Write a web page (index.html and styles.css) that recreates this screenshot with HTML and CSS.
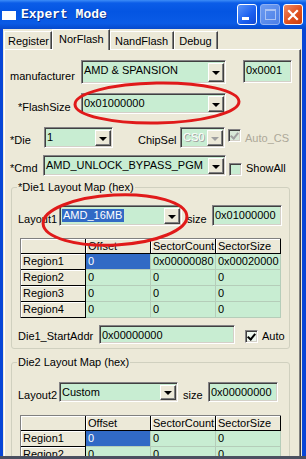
FILE: index.html
```html
<!DOCTYPE html>
<html lang="en">
<head>
  <meta charset="UTF-8">
  <title>Expert Mode</title>
  <link rel="stylesheet" href="styles.css">
</head>
<body>
  <div class="window">
    <div class="titlebar">
      <span class="app-icon"></span>
      <span class="title">Expert Mode</span>
      <div class="caption-btns">
        <div class="cap-btn min"><span class="min-bar"></span></div>
        <div class="cap-btn max"><span class="max-box"></span></div>
        <div class="cap-btn close">
          <svg width="12" height="12" viewBox="0 0 12 12"><path d="M2 2 L10 10 M10 2 L2 10" stroke="#fff" stroke-width="2.2" stroke-linecap="square"/></svg>
        </div>
      </div>
    </div>

    <div class="client">
      <div class="tabs">
        <div class="tab first">Register</div>
        <div class="tab active">NorFlash</div>
        <div class="tab">NandFlash</div>
        <div class="tab">Debug</div>
      </div>

      <div class="page">
        <div class="row row-manu">
          <span class="lbl lbl-manu">manufacturer</span>
          <div class="combo w-145"><span class="val">AMD &amp; SPANSION</span><span class="drop"></span></div>
          <div class="edit e-id">0x0001</div>
        </div>

        <div class="row row-size">
          <span class="lbl lbl-flash">*FlashSize</span>
          <div class="combo w-145"><span class="val">0x01000000</span><span class="drop"></span></div>
        </div>

        <div class="row row-die">
          <span class="lbl lbl-die">*Die</span>
          <div class="combo w-69"><span class="val">1</span><span class="drop"></span></div>
          <span class="lbl lbl-chip">ChipSel</span>
          <div class="combo w-45 disabled"><span class="val">CS0</span><span class="drop"></span></div>
          <span class="check disabled checked"></span>
          <span class="check-text muted">Auto_CS</span>
        </div>

        <div class="row row-cmd">
          <span class="lbl lbl-cmd">*Cmd</span>
          <div class="combo w-183"><span class="val">AMD_UNLOCK_BYPASS_PGM</span><span class="drop"></span></div>
          <span class="check cmd-check"></span>
          <span class="check-text">ShowAll</span>
        </div>

        <fieldset class="group group-1">
          <legend>*Die1 Layout Map (hex)</legend>
          <div class="row row-layout">
            <span class="lbl lbl-layout">Layout1</span>
            <div class="combo w-123"><span class="val"><span class="sel">AMD_16MB</span></span><span class="drop"></span></div>
            <span class="lbl lbl-size">size</span>
            <div class="edit e-size">0x01000000</div>
          </div>

          <div class="grid">
            <div class="hd"></div><div class="hd">Offset</div><div class="hd">SectorCount</div><div class="hd">SectorSize</div>
            <div class="rh">Region1</div><div class="cell current">0</div><div class="cell">0x00000080</div><div class="cell">0x00020000</div>
            <div class="rh">Region2</div><div class="cell">0</div><div class="cell">0</div><div class="cell">0</div>
            <div class="rh">Region3</div><div class="cell">0</div><div class="cell">0</div><div class="cell">0</div>
            <div class="rh">Region4</div><div class="cell">0</div><div class="cell">0</div><div class="cell">0</div>
          </div>

          <div class="row row-start">
            <span class="lbl lbl-start">Die1_StartAddr</span>
            <div class="edit e-start">0x00000000</div>
            <span class="check checked auto-check"></span>
            <span class="check-text">Auto</span>
          </div>
        </fieldset>

        <fieldset class="group group-2">
          <legend>Die2 Layout Map (hex)</legend>
          <div class="row row-layout2">
            <span class="lbl lbl-layout2">Layout2</span>
            <div class="combo w-119"><span class="val">Custom</span><span class="drop"></span></div>
            <span class="lbl lbl-size">size</span>
            <div class="edit e-size">0x00000000</div>
          </div>

          <div class="grid grid-2">
            <div class="hd"></div><div class="hd">Offset</div><div class="hd">SectorCount</div><div class="hd">SectorSize</div>
            <div class="rh">Region1</div><div class="cell current">0</div><div class="cell">0</div><div class="cell">0</div>
            <div class="rh">Region2</div><div class="cell">0</div><div class="cell">0</div><div class="cell">0</div>
          </div>
        </fieldset>
      </div>
    </div>
    <div class="frame-bottom"></div>

    <svg class="marks" width="306" height="459" viewBox="0 0 306 459">
      <ellipse cx="157" cy="103" rx="82" ry="20" fill="none" stroke="#e01a1a" stroke-width="3" transform="rotate(-1 157 103)"/>
      <ellipse cx="115" cy="220" rx="72" ry="25" fill="none" stroke="#e01a1a" stroke-width="3" transform="rotate(-3 115 220)"/>
    </svg>
  </div>
</body>
</html>
```

FILE: styles.css
```css
body {
  margin: 0;
  background: #ece9d8;
  font-family: "Liberation Sans", Arial, sans-serif;
  font-size: 11px;
  color: #000;
}

.window {
  position: relative;
  width: 306px;
  height: 459px;
  background: #0846d6;
  display: flex;
  flex-direction: column;
  overflow: hidden;
}

/* title bar */
.titlebar {
  height: 29px;
  flex: none;
  display: flex;
  align-items: center;
  background: linear-gradient(to bottom, #3d8df7 0, #0b5de8 3px, #0455e2 40%, #0a5be6 80%, #0649cc 100%);
}

.app-icon {
  width: 14px;
  height: 9px;
  margin-left: 2px;
  margin-top: 1px;
  background: #fff;
}

.title {
  margin-left: 5px;
  font-family: "Liberation Mono", "Courier New", monospace;
  font-weight: bold;
  font-size: 13px;
  color: #fff;
  text-shadow: 1px 1px 0 #0a2f8a;
}

.caption-btns {
  margin-left: auto;
  margin-right: 3px;
  display: flex;
  gap: 3px;
}

.cap-btn {
  box-sizing: border-box;
  width: 20px;
  height: 21px;
  border: 1px solid #fff;
  border-radius: 3px;
  background: linear-gradient(135deg, #5b94f8, #1a5ff0 60%, #1249d4);
  display: flex;
  align-items: center;
  justify-content: center;
  position: relative;
}

.min-bar {
  position: absolute;
  left: 4px;
  bottom: 4px;
  width: 7px;
  height: 3px;
  background: #fff;
}

.cap-btn.max {
  border-color: #8fb1f3;
  background: linear-gradient(135deg, #6d9bf0, #4b7fe8);
}

.max-box {
  width: 9px;
  height: 8px;
  border: 1px solid #a9c2f4;
  border-top-width: 2px;
}

.cap-btn.close {
  background: linear-gradient(135deg, #f08b68, #e0511f 55%, #c93d0f);
}

/* client area */
.client {
  flex: 1;
  margin: 0 4px 0 3px;
  padding-top: 2px;
  background: #ece9d8;
  overflow: hidden;
}

.frame-bottom {
  flex: none;
  height: 3px;
  background: #4b5060;
}

.tabs {
  display: flex;
  height: 18px;
  padding-left: 1px;
  align-items: flex-end;
}

.tab {
  box-sizing: border-box;
  height: 18px;
  padding: 3px 5px 0 4px;
  border-left: 1px solid #fff;
  border-top: 1px solid #fff;
  border-right: 1px solid #404040;
  box-shadow: inset -1px 0 #808080;
  font-size: 11px;
  line-height: 13px;
}

.tab.first {
  width: 48px;
  padding-left: 3px;
}

.tab.active {
  position: relative;
  height: 21px;
  margin-bottom: -1px;
  padding-top: 3px;
  padding-left: 6px;
  background: #ece9d8;
  z-index: 1;
  width: 58px;
}

.page {
  box-sizing: border-box;
  height: 420px;
  margin-left: 1px;
  margin-right: 1px;
  border-top: 1px solid #fff;
  border-left: 1px solid #fff;
  border-right: 1px solid #404040;
  box-shadow: inset -1px 0 #808080;
}

.row {
  display: flex;
  align-items: flex-end;
}

.lbl {
  flex: none;
  box-sizing: border-box;
  line-height: 16px;
}

.row-manu { margin-top: 10px; height: 24px; }
.row-size { margin-top: 9px; height: 21px; }
.row-die { margin-top: 13px; height: 21px; }
.row-cmd { margin-top: 7px; height: 21px; }

.lbl-manu { width: 76px; padding-left: 5px; }
.lbl-flash { width: 76px; padding-left: 13px; line-height: 13px; }
.lbl-die { width: 39px; padding-left: 5px; }
.lbl-chip { width: 42px; margin-left: 25px; }
.lbl-cmd { width: 38px; padding-left: 5px; }

/* combo box */
.combo {
  flex: none;
  box-sizing: border-box;
  height: 100%;
  display: flex;
  background: #c8edd2;
  border: 1px solid;
  border-color: #848284 #fff #fff #848284;
  box-shadow: inset 1px 1px 0 #404040, inset -1px -1px 0 #d4d0c8;
}

.combo .val {
  flex: 1;
  padding: 2px 0 0 2px;
  font-size: 11px;
  line-height: 14px;
  white-space: nowrap;
  overflow: hidden;
}

.combo .drop {
  flex: none;
  box-sizing: border-box;
  width: 16px;
  margin: 2px 1px 1px 0;
  background: #ece9d8;
  border: 1px solid;
  border-color: #fff #404040 #404040 #fff;
  box-shadow: inset -1px -1px 0 #808080;
  display: flex;
  align-items: center;
  justify-content: center;
}

.combo .drop::after {
  content: "";
  border-left: 4px solid transparent;
  border-right: 4px solid transparent;
  border-top: 4px solid #000;
  margin-top: 1px;
}

.combo.disabled .val { color: #fff; text-shadow: 1px 1px 0 #a0a0a0; }
.combo.disabled .drop::after { border-top-color: #a0a0a0; }

.w-145 { width: 145px; }
.w-69 { width: 69px; }
.w-45 { width: 45px; }
.w-183 { width: 183px; }
.w-123 { width: 123px; }
.w-119 { width: 119px; }

.sel {
  background: #316ac5;
  color: #fff;
  padding: 0 2px 1px 1px;
}

/* edit box */
.edit {
  flex: none;
  box-sizing: border-box;
  height: 100%;
  padding: 2px 0 0 2px;
  background: #c8edd2;
  border: 1px solid;
  border-color: #848284 #fff #fff #848284;
  box-shadow: inset 1px 1px 0 #404040, inset -1px -1px 0 #d4d0c8;
  font-size: 11px;
  line-height: 14px;
}

.e-id { width: 49px; height: 23px; margin-left: 17px; align-self: flex-start; }
.e-size { width: 70px; }
.e-start { width: 136px; }

/* check box */
.check {
  flex: none;
  box-sizing: border-box;
  width: 13px;
  height: 13px;
  background: #c8edd2;
  border: 1px solid;
  border-color: #848284 #fff #fff #848284;
  box-shadow: inset 1px 1px 0 #404040, inset -1px -1px 0 #d4d0c8;
  position: relative;
}

.check.checked::after {
  content: "";
  position: absolute;
  left: 3px;
  top: 1px;
  width: 3px;
  height: 6px;
  border-right: 2px solid #000;
  border-bottom: 2px solid #000;
  transform: rotate(40deg);
}

.check.disabled { margin-left: 3px; margin-bottom: 6px; background: #d8e8d8; }
.check.disabled::after { border-color: #a0a0a0; }

.check-text {
  flex: none;
  margin-left: 4px;
  font-size: 11px;
  line-height: 16px;
}

.check-text.muted { color: #aca899; margin-bottom: 2px; }

.cmd-check { margin-left: 3px; }

/* group box */
.group {
  box-sizing: border-box;
  width: 279px;
  margin: 5px 0 0 6px;
  padding: 0 0 4px 0;
  border: 1px solid #d0d0bf;
  border-radius: 3px;
}

.group legend {
  margin-left: 5px;
  padding: 0 1px;
  font-size: 11px;
  line-height: 13px;
}

.group-2 {
  margin-top: 7px;
  padding-bottom: 0;
  height: 120px;
}

.row-layout { margin-top: 11px; height: 21px; }
.row-layout2 { margin-top: 13px; height: 20px; }
.row-start { margin-top: 7px; height: 19px; }

.lbl-layout, .lbl-layout2 { width: 47px; padding-left: 6px; line-height: 13px; }
.lbl-size { width: 25px; margin-left: 5px; line-height: 14px; }
.lbl-start { width: 87px; padding-left: 6px; }

.auto-check { margin-left: 10px; margin-bottom: 1px; background: #eef7ee; }

/* sector grid */
.grid {
  display: grid;
  grid-template-columns: 65px 65px 65px 65px;
  grid-template-rows: 15px repeat(4, 16px);
  width: 260px;
  margin: 12px 0 0 8px;
  border-left: 1px solid #808080;
  border-top: 1px solid #808080;
}

.grid-2 {
  grid-template-rows: 15px 16px 16px;
  margin-top: 13px;
}

.grid > div {
  box-sizing: border-box;
  padding-left: 2px;
  font-size: 11px;
  line-height: 15px;
  white-space: nowrap;
  overflow: hidden;
}

.hd, .rh {
  background: #ece9d8;
  border-right: 1px solid #000;
  border-bottom: 1px solid #000;
  box-shadow: inset 1px 1px 0 #fff;
}

.cell {
  background: #c8edd2;
  border-right: 1px solid #b5cdb9;
  border-bottom: 1px solid #b5cdb9;
}

.cell.current {
  background: #316ac5;
  color: #fff;
}

/* annotation marks */
.marks {
  position: absolute;
  left: 0;
  top: 0;
  pointer-events: none;
}
```
